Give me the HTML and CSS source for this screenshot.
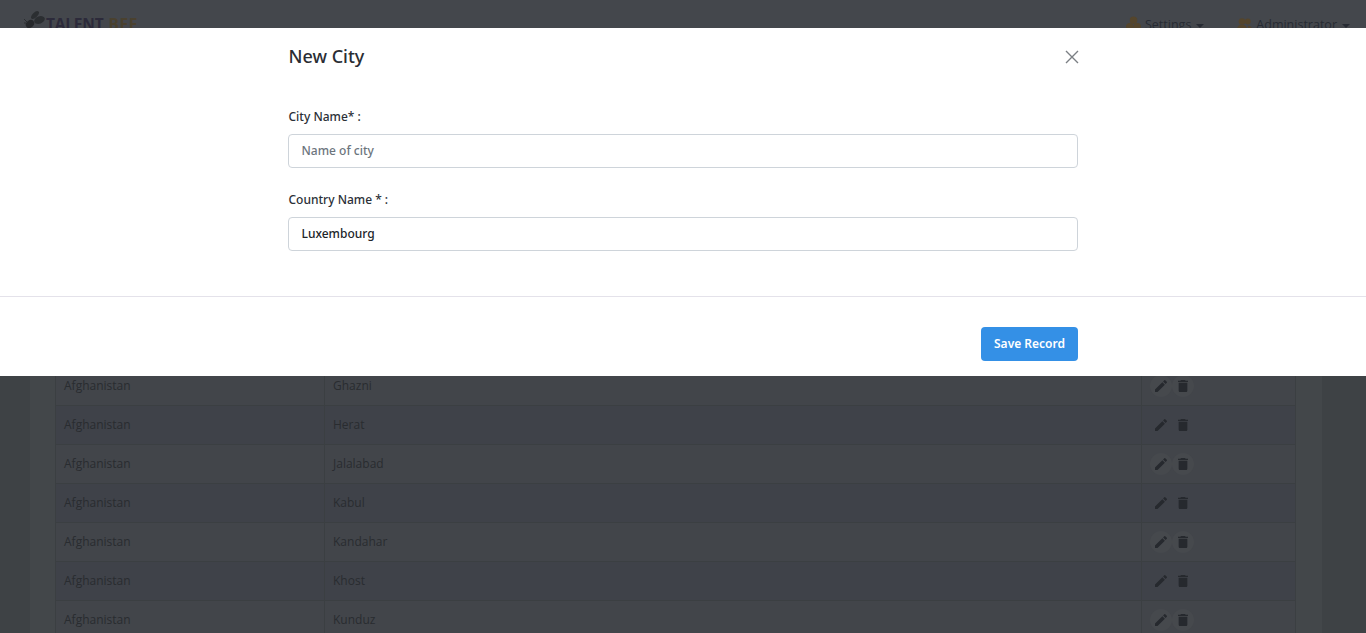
FILE: index.html
```html
<!DOCTYPE html>
<html lang="en">
<head>
<meta charset="utf-8">
<title>New City</title>
<link rel="stylesheet" href="styles.css">
</head>
<body>
<div class="page">
  <header class="navbar">
    <div class="logo">
      <svg class="bee" width="24" height="22" viewBox="0 0 24 22"><ellipse cx="11" cy="5" rx="5" ry="2.4" fill="#2b2e31" transform="rotate(-45 11 5)"/><ellipse cx="15.5" cy="10" rx="5.5" ry="3.6" fill="#2b2e31" transform="rotate(-20 15.5 10)"/><ellipse cx="6" cy="14" rx="4.5" ry="3.6" fill="#26282b" transform="rotate(-40 6 14)"/><path d="M0 9l3 3M0 13l2 0" stroke="#2b2e31"/></svg>
      <span class="talent">TALENT</span><span class="beeword">BEE</span>
    </div>
    <nav class="menu">
      <span class="menu-item"><svg width="15" height="18" viewBox="0 0 16 18"><circle cx="8" cy="5" r="4" fill="#54452c"/><circle cx="4" cy="12" r="4" fill="#54452c"/><circle cx="12" cy="12" r="4" fill="#54452c"/></svg>Settings<i class="caret"></i></span>
      <span class="menu-item"><svg width="15" height="18" viewBox="0 0 18 18"><circle cx="6" cy="6" r="4" fill="#54452c"/><circle cx="13" cy="6" r="3.5" fill="#54452c"/><path d="M0 17c0-6 3-7 6-7s6 1 6 7zM13 11c3 0 5 1 5 6h-4z" fill="#54452c"/></svg>Administrator<i class="caret"></i></span>
    </nav>
  </header>
  <main class="card">
    <table class="table">
      <tbody>
        <tr class="odd"><td class="c1">Afghanistan</td><td class="c2">Ghazni</td><td class="c3"><span class="acts"><span class="act hi"><svg viewBox="0 0 24 24"><use href="#pen"/></svg></span><span class="act hi"><svg viewBox="0 0 24 24"><use href="#bin"/></svg></span></span></td></tr>
        <tr><td class="c1">Afghanistan</td><td class="c2">Herat</td><td class="c3"><span class="acts"><span class="act"><svg viewBox="0 0 24 24"><use href="#pen"/></svg></span><span class="act"><svg viewBox="0 0 24 24"><use href="#bin"/></svg></span></span></td></tr>
        <tr class="odd"><td class="c1">Afghanistan</td><td class="c2">Jalalabad</td><td class="c3"><span class="acts"><span class="act hi"><svg viewBox="0 0 24 24"><use href="#pen"/></svg></span><span class="act hi"><svg viewBox="0 0 24 24"><use href="#bin"/></svg></span></span></td></tr>
        <tr><td class="c1">Afghanistan</td><td class="c2">Kabul</td><td class="c3"><span class="acts"><span class="act"><svg viewBox="0 0 24 24"><use href="#pen"/></svg></span><span class="act"><svg viewBox="0 0 24 24"><use href="#bin"/></svg></span></span></td></tr>
        <tr class="odd"><td class="c1">Afghanistan</td><td class="c2">Kandahar</td><td class="c3"><span class="acts"><span class="act hi"><svg viewBox="0 0 24 24"><use href="#pen"/></svg></span><span class="act hi"><svg viewBox="0 0 24 24"><use href="#bin"/></svg></span></span></td></tr>
        <tr><td class="c1">Afghanistan</td><td class="c2">Khost</td><td class="c3"><span class="acts"><span class="act"><svg viewBox="0 0 24 24"><use href="#pen"/></svg></span><span class="act"><svg viewBox="0 0 24 24"><use href="#bin"/></svg></span></span></td></tr>
        <tr class="odd"><td class="c1">Afghanistan</td><td class="c2">Kunduz</td><td class="c3"><span class="acts"><span class="act hi"><svg viewBox="0 0 24 24"><use href="#pen"/></svg></span><span class="act hi"><svg viewBox="0 0 24 24"><use href="#bin"/></svg></span></span></td></tr>
      </tbody>
    </table>
  </main>
</div>
<svg class="defs" width="0" height="0">
  <symbol id="pen" viewBox="0 0 24 24"><path fill="#26292e" d="M3 17.25V21h3.75L17.81 9.94l-3.75-3.75L3 17.25zM20.71 7.04a1 1 0 0 0 0-1.41l-2.34-2.34a1 1 0 0 0-1.41 0l-1.83 1.83 3.75 3.75 1.83-1.83z"/></symbol>
  <symbol id="bin" viewBox="0 0 24 24"><path fill="#26292e" d="M5.5 19c0 1.1.9 2 2 2h9c1.1 0 2-.9 2-2V7h-13v12zM19.5 4H16l-1-1H9L8 4H4.5v2h15V4z"/></symbol>
</svg>
<div class="modal" role="dialog">
  <div class="dialog">
    <div class="modal-head">
      <h2 class="modal-title">New City</h2>
      <svg class="close" width="14" height="14" viewBox="0 0 14 14"><path d="M1 1l12 12M13 1L1 13" stroke="#7b7f84" stroke-width="1.4" fill="none"/></svg>
    </div>
    <form class="modal-body">
      <div class="field">
        <label class="label">City Name* :</label>
        <input class="input" type="text" placeholder="Name of city">
      </div>
      <div class="field">
        <label class="label">Country Name * :</label>
        <input class="input" type="text" value="Luxembourg">
      </div>
    </form>
  </div>
  <div class="modal-foot">
    <div class="foot-inner"><button class="save" type="button">Save Record</button></div>
  </div>
</div>
</body>
</html>
```
FILE: styles.css
```css
* { box-sizing: border-box; }
html, body { margin: 0; height: 100%; overflow: hidden; }
body { background: #3e4245; font-family: "Open Sans", sans-serif; font-size: 12px; color: #2b2e33; }
.defs { position: absolute; }
.page { height: 633px; display: flex; flex-direction: column; }
.navbar { height: 66px; flex: none; background: #44474c; display: flex; justify-content: space-between; padding: 9px 16px 0 24px; }
.logo { display: flex; align-items: flex-start; font-size: 15.5px; font-weight: 700; line-height: 30px; }
.bee { margin-top: 1px; }
.talent { color: #2c2a3a; margin-right: 5px; margin-left: -2px; letter-spacing: -0.2px; }
.beeword { color: #4a412f; letter-spacing: 0.6px; }
.menu { display: flex; gap: 33px; font-size: 12.5px; color: #272b33; line-height: 32px; }
.menu-item { display: flex; align-items: flex-start; gap: 4px; }
.menu-item svg { margin-top: 6px; }
.caret { width: 8px; height: 4px; margin: 15px 0 0 1px; border-left: 4px solid transparent; border-right: 4px solid transparent; border-top: 4px solid #272b33; }
.card { flex: 1; margin: 0 44px 0 30px; background: #43474a; padding: 300px 25px 0 25px; }
.table { width: 1240px; border-collapse: collapse; table-layout: fixed; }
.table td { height: 39px; border: 1px solid #3b3f42; padding: 0 8px 2px; color: #292c30; }
tr { background: #3f4249; }
tr.odd { background: #42454a; }
.table .c1 { width: 269px; }
.table .c2 { width: 817px; }
.table .c3 { width: 154px; padding: 0 8px; }
.acts { display: flex; gap: 0; }
.act { width: 22px; height: 22px; border-radius: 50%; display: flex; align-items: center; justify-content: center; }
.act.hi { background: #46494d; }
.act svg { width: 16px; height: 16px; }
.modal { position: absolute; left: 0; top: 28px; width: 1366px; height: 348px; background: #fff; }
.dialog { width: 790px; margin-left: 288px; }
.modal-head { display: flex; justify-content: space-between; align-items: center; height: 58px; padding-left: 0.5px; }
.modal-title { margin: 0 0 2px; font-family: "Noto Sans", sans-serif; font-size: 18px; font-weight: 500; line-height: 26px; color: #2a2d33; }
.close { margin-right: -1px; }
.modal-body { padding-top: 22px; display: flex; flex-direction: column; gap: 23px; }
.field { display: flex; flex-direction: column; gap: 8px; }
.label { font-family: "Noto Sans", sans-serif; padding-left: 0.5px; font-size: 12px; line-height: 18px; font-weight: 500; color: #2b3037; }
.input { width: 100%; height: 34px; padding: 0 12.5px 2px; border: 1px solid #ced4da; border-radius: 4px; font: 500 12px "Noto Sans", sans-serif; color: #212529; outline: none; background: #fff; }
.input::placeholder { color: #6c757d; opacity: 1; }
.modal-foot { position: absolute; left: 0; right: 0; top: 268px; height: 80px; border-top: 1px solid #e4e2ea; }
.foot-inner { width: 790px; margin-left: 288px; padding-top: 30px; display: flex; justify-content: flex-end; }
.save { width: 97px; height: 34px; padding: 0 0 2px; border: 0; border-radius: 4px; background: #3490e6; color: #fff; font: 600 12px "Noto Sans", sans-serif; }
```
